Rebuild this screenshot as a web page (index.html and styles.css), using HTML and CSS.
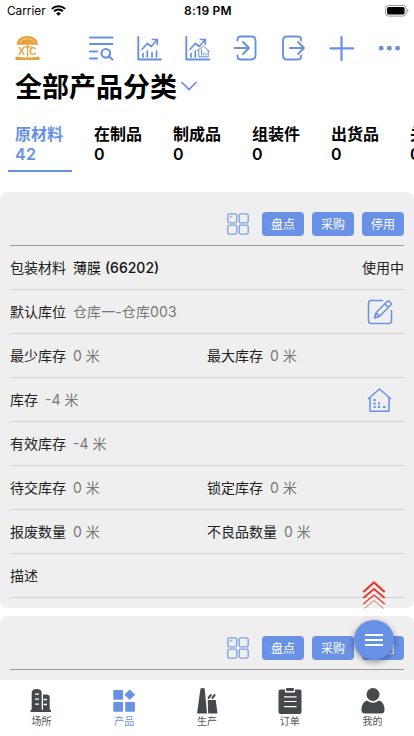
FILE: index.html
```html
<!DOCTYPE html>
<html lang="zh-CN">
<head>
<meta charset="utf-8">
<meta name="viewport" content="width=device-width, initial-scale=1">
<title>全部产品分类</title>
<link rel="stylesheet" href="styles.css">
</head>
<body>
<svg class="defs" width="0" height="0">
  <symbol id="grid" viewBox="0 0 22 22"><g fill="none" stroke="#7d9fe6" stroke-width="1.300"><rect x=".8" y=".8" width="9" height="9" rx="1.600"/><rect x="12.200" y=".8" width="9" height="9" rx="1.600"/><rect x=".8" y="12.200" width="9" height="9" rx="1.600"/><rect x="12.200" y="12.200" width="9" height="9" rx="1.600"/><path d="M3 5Q3 3 5.500 3" stroke-width="1"/></g></symbol>
</svg>
<div class="app">
  <header class="status">
    <div class="carrier">Carrier
      <svg width="15" height="11" viewBox="0 0 15 11"><path d="M.8 3.900a9.600 9.600 0 0 1 13.400 0M3.100 6.300a6.300 6.300 0 0 1 8.800 0" fill="none" stroke="#000" stroke-width="2"/><path d="M5.100 8.400a3.500 3.500 0 0 1 4.800 0L7.500 10.800z"/></svg>
    </div>
    <div class="time">8:19 PM</div>
    <svg class="battery" width="24" height="12" viewBox="0 0 24 12"><rect x=".5" y=".5" width="20.500" height="10.600" rx="3" fill="none" stroke="#999"/><rect x="2" y="2" width="17.500" height="7.600" rx="1.600"/><path d="M22.200 4v3.700q1.200-.6 1.200-1.850T22.200 4z" fill="#999"/></svg>
  </header>

  <div class="toolbar">
    <svg class="logo" width="26" height="26" viewBox="0 0 26 26"><path d="M2.500 9.800Q3.500 1 13.300 1T24 9.800z" fill="#e9a23b"/><path d="M5.500 7.500Q8 3.600 13.300 3.600T21 7.500" fill="none" stroke="#f6d59c" stroke-width=".9"/><path d="M9.500 11.800h8M13.600 9.500v12.500" fill="none" stroke="#e9a23b" stroke-width="1.300"/><path d="M1.500 21.500q12 2.200 24 0V25h-24z" fill="#e9a23b"/><text x="4.200" y="19.800">X</text><text x="15.200" y="19.800">C</text></svg>
    <div class="tools">
      <svg width="26" height="26" viewBox="0 0 26 26"><path d="M2 2.500h22.500M2 9h22.500M2 16.500h7M2 23.500h7" stroke-width="2"/><circle cx="17.800" cy="18.300" r="4.300" stroke-width="2.200"/><path d="M21 21.500l3.500 3" stroke-width="2.200"/></svg>
      <svg width="26" height="26" viewBox="0 0 26 26"><path d="M2.300 2v22.500H25"/><path d="M6.300 14l5-5.500 4 3 5.500-6.500M16.300 4.500h5v4.800M7 22v-3.500M11.300 22v-6M16 22v-4.500M20.500 22v-6" stroke-width="1.700"/></svg>
      <svg width="26" height="26" viewBox="0 0 26 26"><path d="M2.300 2v22.500H25.500"/><path d="M6.300 14l5-5.500 4 3 5.500-6.500M16.300 4.500h5v4.800M7 22v-3.500M11.300 22v-6" stroke-width="1.700"/><path d="M13.500 15.500l6-4.500 5.800 5.300M14.800 15v6.800h9.400v-6.500M17.500 15v5M19.800 18v2M22 18.500v1.500" stroke-width="1"/></svg>
      <svg width="26" height="26" viewBox="0 0 26 26"><path d="M5.500 5.500V4.500q0-3 3-3h11q4 0 4 4v15q0 4-4 4h-11q-3 0-3-3V20.500M2.500 13h14M11 7l6 6-6 6"/></svg>
      <svg width="26" height="26" viewBox="0 0 26 26"><path d="M21 5.500V4.500q0-3-3-3H7q-4 0-4 4v15q0 4 4 4h11q3 0 3-3V20.500M9.800 13h14M18 7l6 6-6 6"/></svg>
      <svg width="26" height="26" viewBox="0 0 26 26"><path d="M13.500 2v23M2.500 13.300h22.500" stroke-width="2.200"/></svg>
      <svg class="dots" width="26" height="26" viewBox="0 0 26 26"><circle cx="5.200" cy="13.200" r="2.400"/><circle cx="13.400" cy="13.200" r="2.400"/><circle cx="21.600" cy="13.200" r="2.400"/></svg>
    </div>
  </div>

  <h1>全部产品分类<svg width="18" height="11" viewBox="0 0 18 11"><path d="M2 1.500l7 7 7-7" fill="none" stroke="#6791e5" stroke-width="1.700" stroke-linecap="round"/></svg></h1>

  <nav class="tabs">
    <div class="tab active">原材料<b>42</b></div>
    <div class="tab">在制品<b>0</b></div>
    <div class="tab">制成品<b>0</b></div>
    <div class="tab">组装件<b>0</b></div>
    <div class="tab">出货品<b>0</b></div>
    <div class="tab">关注<b>0</b></div>
  </nav>

  <main>
    <section class="card">
      <div class="actions"><svg width="22" height="22"><use href="#grid"/></svg><button>盘点</button><button>采购</button><button>停用</button></div>
      <div class="row title"><div class="cell">包装材料<span>薄膜 <strong>(66202)</strong></span></div><div class="state">使用中</div></div>
      <div class="row"><div class="cell">默认库位<span class="place">仓库一-仓库003</span></div>
        <svg class="rowicon" width="26" height="26" viewBox="0 0 26 26"><path d="M16 1.500H4.500q-3 0-3 3v17q0 3 3 3h17q3 0 3-3V11M7.500 19l1.500-5.200L20 2.700q1.300-1.200 2.800 0l.8.800q1.200 1.500 0 2.700L12.600 17.300zM18 5l3.500 3.500M9.200 14l3.300 3.300"/></svg></div>
      <div class="row"><div class="cell">最少库存<span>0 米</span></div><div class="cell">最大库存<span>0 米</span></div></div>
      <div class="row"><div class="cell">库存<span>-4 米</span></div>
        <svg class="rowicon" width="26" height="26" viewBox="0 0 26 26"><path d="M1 12L12.500 2 24 12M3 10.500v13.700h19V10.500"/><path d="M6.500 13h2.200M6.500 16.500h2.200M6.500 20h2.200M11 16.500h2.200M11 20h2.200M16 20h2.600" stroke-width="2.200"/></svg></div>
      <div class="row"><div class="cell">有效库存<span>-4 米</span></div></div>
      <div class="row"><div class="cell">待交库存<span>0 米</span></div><div class="cell">锁定库存<span>0 米</span></div></div>
      <div class="row"><div class="cell">报废数量<span>0 米</span></div><div class="cell">不良品数量<span>0 米</span></div></div>
      <div class="row"><div class="cell">描述</div></div>
    </section>
    <section class="card">
      <div class="actions"><svg width="22" height="22"><use href="#grid"/></svg><button>盘点</button><button>采购</button><button>停用</button></div>
    </section>
  </main>

  <div class="float">
    <svg width="24" height="30" viewBox="0 0 24 30" fill="none" stroke="#e8382d"><path d="M1.300 12L12 2.500 22.700 12" stroke-width="2.300"/><path d="M1.300 18L12 9 22.700 18" stroke-width="1.800"/><path d="M1.300 24L12 15 22.700 24" stroke-width="1.300"/><path d="M2.300 28.500L12 20.500 21.700 28.500" stroke-width=".7"/></svg>
    <div class="fab"><i></i><i></i><i></i></div>
  </div>

  <footer class="bottom">
    <div class="item"><svg width="26" height="26" viewBox="0 0 26 26"><path d="M2.500 21.800h1.200V5q0-4 5-4t5 4v16.800h1.300V6.500h3.500q3.200 0 3.200 3v12.300h1.300V24H2.500z"/><path d="M7 6.200h4M7 11.200h4M7 16.200h4M15.500 11.500h3.500M15.500 16.500h3.500" stroke="#fff" stroke-width="1.300"/></svg>场所</div>
    <div class="item on"><svg width="26" height="26" viewBox="0 0 26 26"><rect x="2.300" y="2" width="9.700" height="9.800" rx=".8"/><path d="M18.700 1.500L24 6.800l-5.300 5.300-5.300-5.300z"/><rect x="2.300" y="14" width="9.700" height="9.800" rx=".8"/><rect x="14.200" y="14" width="9.700" height="9.800" rx=".8"/></svg>产品</div>
    <div class="item"><svg width="26" height="26" viewBox="0 0 26 26"><path d="M6.500.5q2-1 4.200 0L13 25.500H3zM13.700 12h8l1.800 13.500h-9.300z"/><path d="M14.700 9.800l2-2.600M18.500 9.800l2-2.600" fill="none" stroke="#45494b" stroke-width="2.200" stroke-linecap="round"/></svg>生产</div>
    <div class="item"><svg width="26" height="26" viewBox="0 0 26 26"><rect x="1.500" y="1.500" width="23" height="24.500" rx="2"/><path d="M8 0h10v4.500H8z" fill="#fff"/><rect x="9" y="0" width="8" height="3" rx="1"/><path d="M7 8.800h12.500M7 13.500h12.500M7 18.700h12.500" stroke="#fff" stroke-width="1.200"/></svg>订单</div>
    <div class="item"><svg width="26" height="26" viewBox="0 0 26 26"><circle cx="13" cy="6.500" r="6.500"/><path d="M7 12.500q6 4.500 12 0 5.500 2 5.500 9.500 0 3.500-3.500 3.500H5Q1.500 25.500 1.500 22 1.500 14.500 7 12.500z"/></svg>我的</div>
  </footer>
</div>
</body>
</html>
```
FILE: styles.css
```css
* { box-sizing: border-box; }
body { margin: 0; background: #fff; font-family: Inter, "Noto Sans CJK SC", sans-serif; color: #000; }
.defs { position: absolute; }
.app { position: relative; width: 414px; height: 736px; overflow: hidden; display: flex; flex-direction: column; }
.app svg { display: block; flex: none; }

.status { height: 22px; flex: none; display: grid; grid-template-columns: 1fr auto 1fr; align-items: center; padding: 0 5px 1px 7px; font-size: 11.8px; }
.carrier { display: flex; align-items: center; gap: 5px; }
.time { font-weight: 600; font-size: 12px; letter-spacing: .25px; }
.battery { justify-self: end; }

.toolbar { height: 48px; flex: none; display: flex; justify-content: space-between; align-items: center; padding: 4px 12px 0 14px; }
.logo text { font: 700 10px "Liberation Sans", sans-serif; fill: #e9a23b; }
.tools { display: flex; gap: 22px; fill: none; stroke: #6791e5; stroke-width: 1.9; stroke-linecap: round; stroke-linejoin: round; }
.tools .dots { fill: #6791e5; stroke: none; }

h1 { margin: 0; height: 36px; flex: none; padding-left: 15px; display: flex; align-items: center; gap: 3px; font-size: 27px; line-height: 36px; font-weight: 700; }
h1 svg { margin-top: -4px; }

.tabs { height: 86px; flex: none; display: flex; padding: 17px 0 0 8px; gap: 15px; overflow: hidden; }
.tab { flex: 0 0 64px; height: 49px; padding: 1px 0 0 7px; font-size: 16px; font-weight: 600; line-height: 20px; white-space: nowrap; border-bottom: 2px solid transparent; }
.tab b { display: block; font-weight: 600; letter-spacing: .4px; }
.tab.active { color: #6791e5; border-color: #6791e5; }

main { height: 488px; flex: none; overflow: hidden; }
.card { background: #efefef; border-radius: 7px; padding: 0 10px; height: 416px; margin-bottom: 8px; }
.actions { height: 54px; display: flex; justify-content: flex-end; align-items: center; gap: 8px; padding-top: 10px; border-bottom: 1px solid #999; }
.actions svg { margin-right: 5px; }
.actions button { width: 42px; height: 24px; border: 0; border-radius: 4px; padding: 0 0 1px; background: #6991e5; color: #fff; font: 12px "Noto Sans CJK SC", sans-serif; }
.row { height: 44px; display: flex; align-items: center; border-bottom: 1px solid #d1d1d1; font-size: 14px; color: #222; }
.cell { flex: 1; white-space: nowrap; }
.cell, .state { padding-bottom: 2px; }
.cell span { margin-left: 7px; color: #777; }
.cell .place { letter-spacing: .1px; }
.title .cell span { color: #111; }
.title strong { font-weight: 500; }
.rowicon { margin-right: 11px; fill: none; stroke: #6791e5; stroke-width: 1.5; stroke-linejoin: round; }

.float { position: absolute; left: 354px; top: 580px; width: 40px; display: flex; flex-direction: column; align-items: center; }
.fab { width: 40px; height: 40px; margin-top: 10px; border-radius: 50%; background: #6791e5; display: flex; flex-direction: column; align-items: center; justify-content: center; gap: 3px; box-shadow: 0 2px 6px rgba(0,0,0,.4); }
.fab i { width: 18px; height: 2px; background: #fff; }

.bottom { height: 56px; flex: none; display: grid; grid-template-columns: repeat(5, 1fr); background: #fff; }
.item { display: flex; flex-direction: column; align-items: center; padding-top: 8px; font-size: 10px; line-height: 14px; color: #555; fill: #45494b; }
.on { color: #6791e5; fill: #6791e5; }
```
